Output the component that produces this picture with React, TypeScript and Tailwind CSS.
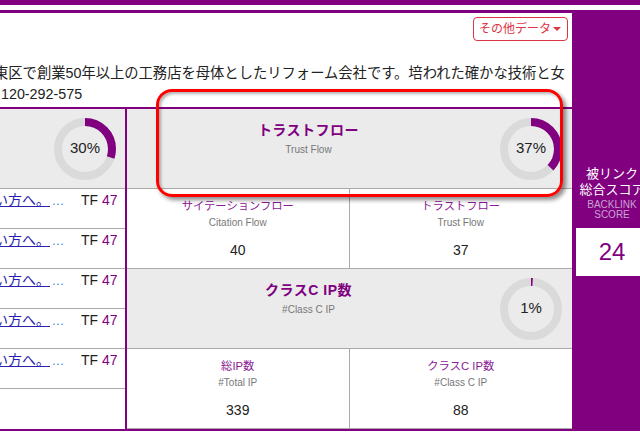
import React from 'react';

const PURPLE = '#800080';

function Donut({ pct }: { pct: number }) {
  const r = 27;
  const c = 2 * Math.PI * r;
  return (
    <div className="relative w-[62px] h-[62px] shrink-0">
      <svg width="62" height="62" viewBox="0 0 62 62" className="-rotate-90">
        <circle cx="31" cy="31" r={r} fill="none" stroke="#dadada" strokeWidth="8" />
        <circle
          cx="31"
          cy="31"
          r={r}
          fill="none"
          stroke={PURPLE}
          strokeWidth="8"
          strokeDasharray={`${(c * pct) / 100} ${c}`}
        />
      </svg>
      <div className="absolute inset-0 flex items-center justify-center text-[15px] text-[#222]">{pct}%</div>
    </div>
  );
}

function MetricHeader({ title, sub, pct }: { title: string; sub: string; pct: number }) {
  return (
    <div className="h-[80px] bg-[#ebebeb] border-b border-[#aaa] flex items-center pr-[10px]">
      <div className="flex-1 self-start pt-[11px] pr-[10px] text-center">
        <div className="text-[14px] leading-[20px] font-bold tracking-[0.5px] text-[#800080]">{title}</div>
        <div className="mt-[3px] text-[10px] leading-[14px] text-[#777]">{sub}</div>
      </div>
      <Donut pct={pct} />
    </div>
  );
}

function Cell({ title, sub, value, divider }: { title: string; sub: string; value: string; divider?: boolean }) {
  return (
    <div className={`pt-[9px] text-center ${divider ? 'border-r border-[#aaa]' : ''}`}>
      <div className="text-[11.3px] leading-[16px] text-[#8a1a96]">{title}</div>
      <div className="mt-[2px] text-[10px] leading-[14px] text-[#777]">{sub}</div>
      <div className="mt-[10px] text-[14px] leading-[20px] text-[#222]">{value}</div>
    </div>
  );
}

function LinkRow() {
  return (
    <div className="h-[40px] border-b border-[#aaa] flex pt-[1px] leading-[20px]">
      <div className="w-[87px] shrink-0 whitespace-nowrap -ml-[6px] text-[14px]">
        <span className="underline text-[#2c1fb0]">い方へ。</span>
        <span className="ml-[2px] text-[13px] tracking-[0.5px] text-[#2f8cf0]">...</span>
      </div>
      <div className="whitespace-nowrap text-[14px]">
        <span className="text-[#222]">TF</span> <span className="text-[#800080]">47</span>
      </div>
    </div>
  );
}

export default function App() {
  return (
    <div
      className="relative w-[640px] h-[443px] overflow-hidden bg-white"
      style={{ fontFamily: '"Liberation Sans", "Noto Sans CJK JP", sans-serif' }}
    >
      <div className="h-[5px] bg-[#800080]" />
      <div className="h-[5px]" />

      <div className="flex bg-[#800080] pt-[3px] pb-[2px]">
        {/* メインパネル */}
        <div className="w-[572px] h-[416px] shrink-0 bg-white overflow-hidden flex flex-col">
          <div className="flex justify-end pr-[4px] pt-[4px]">
            <button className="h-[24px] w-[95px] flex items-center justify-between pl-[5px] pr-[6px] border border-[#dc3545] rounded-[4px] text-[12px] text-[#dc3545]">
              その他データ
              <span className="w-0 h-0 border-l-[4px] border-r-[4px] border-t-[4px] border-l-transparent border-r-transparent border-t-[#dc3545]" />
            </button>
          </div>

          <div className="mt-[22px] text-[14.3px] leading-[21px] text-[#222]">
            <div className="-ml-[6px] whitespace-nowrap">
              東区で創業50年以上の工務店を母体としたリフォーム会社です。培われた確かな技術と女
            </div>
            <div className="pl-[1px]">120-292-575</div>
          </div>

          <div className="mt-[2px] flex-1 flex border-t-2 border-[#800080]">
            {/* 左列 */}
            <div className="w-[127px] shrink-0 flex flex-col border-r-2 border-[#800080]">
              <div className="h-[80px] bg-[#ebebeb] border-b border-[#aaa] flex items-center justify-end pr-[9px]">
                <Donut pct={30} />
              </div>
              <LinkRow />
              <LinkRow />
              <LinkRow />
              <LinkRow />
              <LinkRow />
              <div className="flex-1" />
            </div>

            {/* 右側 */}
            <div className="flex-1 flex flex-col">
              <MetricHeader title="トラストフロー" sub="Trust Flow" pct={37} />
              <div className="h-[80px] grid grid-cols-2 border-b border-[#aaa]">
                <Cell title="サイテーションフロー" sub="Citation Flow" value="40" divider />
                <Cell title="トラストフロー" sub="Trust Flow" value="37" />
              </div>
              <MetricHeader title="クラスC IP数" sub="#Class C IP" pct={1} />
              <div className="flex-1 grid grid-cols-2 border-b border-[#aaa]">
                <Cell title="総IP数" sub="#Total IP" value="339" divider />
                <Cell title="クラスC IP数" sub="#Class C IP" value="88" />
              </div>
            </div>
          </div>
        </div>

        {/* 被リンクスコア */}
        <div className="w-[80px] shrink-0 flex flex-col items-center justify-center">
          <div className="text-[13px] leading-[16px] text-white text-center whitespace-nowrap">
            被リンク
            <br />
            総合スコア
          </div>
          <div className="mt-[2px] text-[10px] leading-[10px] text-[#c9a3d2] text-center">
            BACKLINK
            <br />
            SCORE
          </div>
          <div className="mt-[8px] w-[72px] h-[48px] bg-white flex items-center justify-center text-[24px] text-[#800080]">
            24
          </div>
        </div>
      </div>

      {/* 注目枠 */}
      <div className="absolute left-[156px] top-[89px] w-[407px] h-[108px] border-[3px] border-[#ff0000] rounded-[16px] shadow-[3px_3px_4px_rgba(0,0,0,0.45),inset_2px_2px_3px_rgba(0,0,0,0.3)]" />
    </div>
  );
}
